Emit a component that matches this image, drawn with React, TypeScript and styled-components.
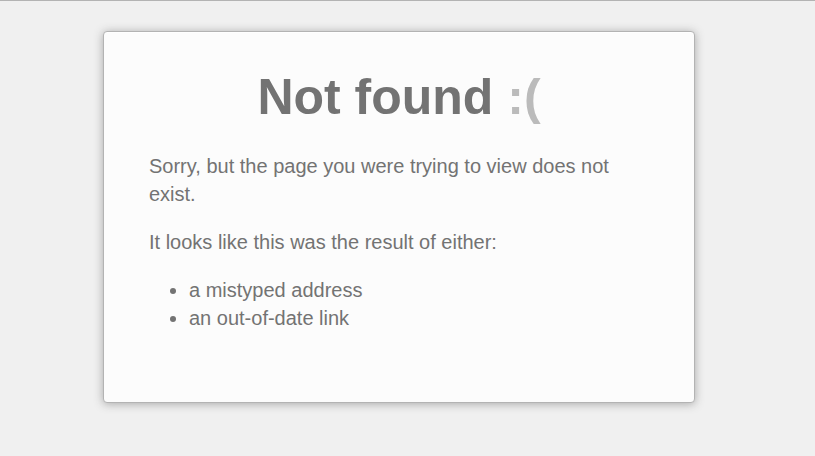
import React from "react";
import styled, { createGlobalStyle } from "styled-components";

const Global = createGlobalStyle`
  html, body { margin: 0; padding: 0; background: #f0f0f0; }
  body {
    font-family: "Liberation Sans", Arial, Helvetica, sans-serif;
    color: #737373;
  }
`;

const Page = styled.div`
  min-height: 456px;
  box-sizing: border-box;
  border-top: 1px solid #b3b3b3;
  padding: 30px 0 0 103px;
  background: #f0f0f0;
`;

const Card = styled.div`
  width: 550px;
  padding: 30px 20px 50px;
  border: 1px solid #b3b3b3;
  border-radius: 4px;
  background: #fcfcfc;
  box-shadow: 0 1px 10px #a7a7a7, inset 0 1px 0 #fff;
  font-size: 20px;
  line-height: 28px;
`;

const Title = styled.h1`
  margin: 0 10px;
  font-size: 50px;
  line-height: 70px;
  font-weight: bold;
  text-align: center;
  color: #737373;
`;

const Sad = styled.span`
  color: #bbb;
`;

const Container = styled.div`
  max-width: 500px;
  margin: 0 auto;
`;

const Para = styled.p`
  margin: 20px 0;
`;

const List = styled.ul`
  margin: 20px 0;
  padding: 0 0 0 40px;
`;

export default function App() {
  return (
    <>
      <Global />
      <Page>
        <Card>
          <Title>
            Not found <Sad>:(</Sad>
          </Title>
          <Container>
            <Para>Sorry, but the page you were trying to view does not exist.</Para>
            <Para>It looks like this was the result of either:</Para>
            <List>
              <li>a mistyped address</li>
              <li>an out-of-date link</li>
            </List>
          </Container>
        </Card>
      </Page>
    </>
  );
}
